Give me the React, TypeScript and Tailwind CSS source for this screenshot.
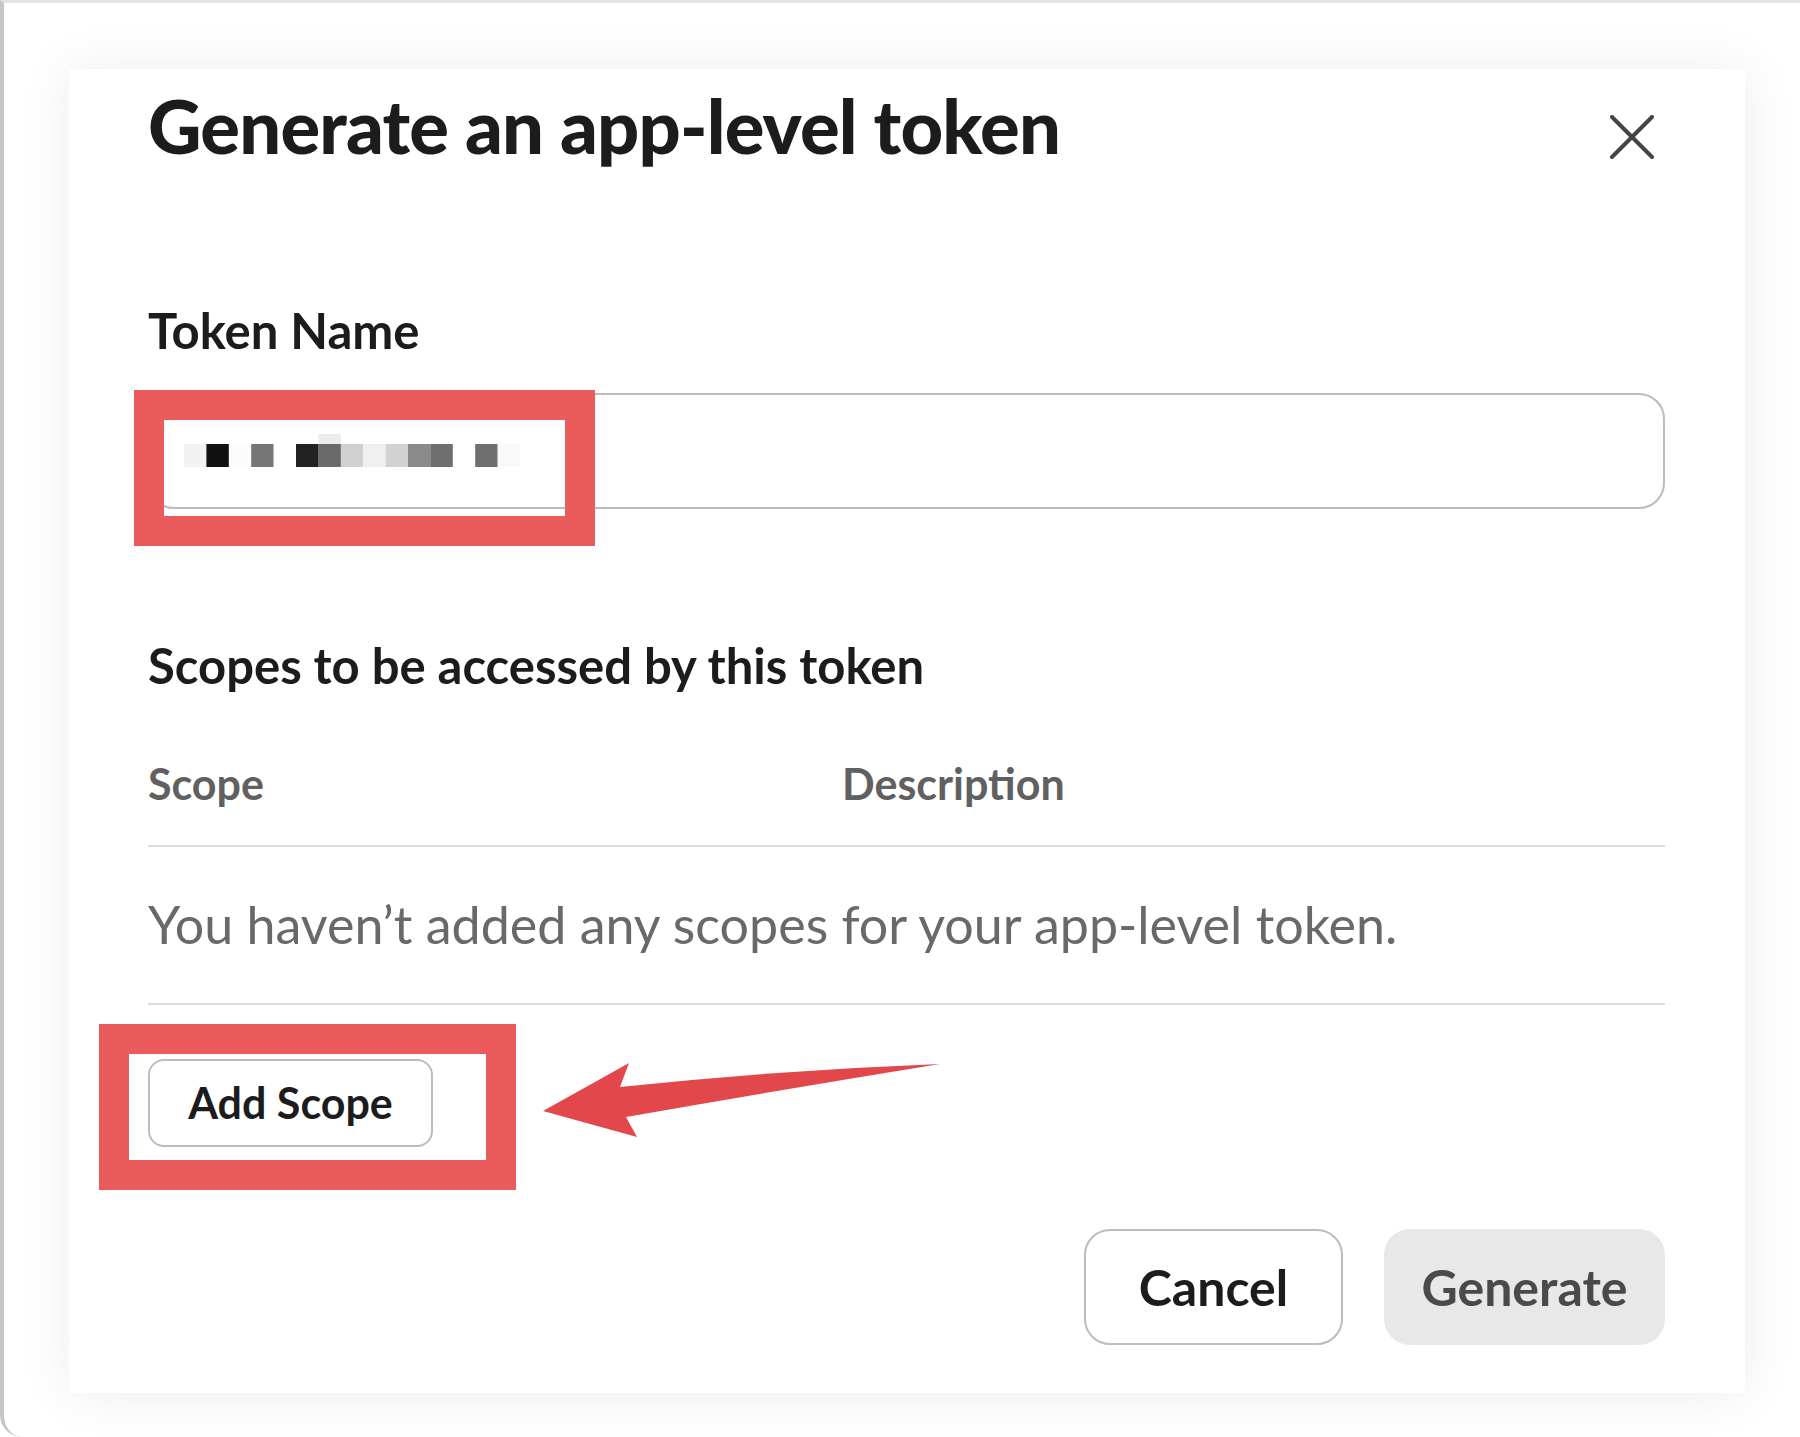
import React from 'react'

// pixelated token value, one cell per block
const blocks = [
  '#f2f2f2', '#111111', '#fcfcfc', '#767676', '#ffffff', '#222222', '#6a6a6a', '#d0d0d0',
  '#efefef', '#d3d3d3', '#8b8b8b', '#6f6f6f', '#ffffff', '#6f6f6f', '#f9f9f9',
]

function BlurredToken() {
  return (
    <svg width="336" height="33" viewBox="0 0 336 33" className="block">
      <rect x={6 * 22.4} y="0" width="22.4" height="10" fill="#ebebeb" />
      {blocks.map((c, i) => (
        <rect key={i} x={i * 22.4} y="10" width="22.6" height="23" fill={c} />
      ))}
    </svg>
  )
}

function CloseIcon() {
  return (
    <svg width="44" height="44" viewBox="0 0 44 44" fill="none">
      <path d="M2 2 L42 42 M42 2 L2 42" stroke="#454545" strokeWidth="4" strokeLinecap="round" />
    </svg>
  )
}

// ── annotation overlays (red boxes + arrow) ───────────────────────────────────
// offsets are page coords minus the frame border (4px left, 3px top)

function Annotations() {
  return (
    <>
      <div className="absolute left-[130px] top-[387px] w-[461px] h-[156px] border-[30px] border-[#eb5b5b] pointer-events-none" />
      <div className="absolute left-[95px] top-[1021px] w-[417px] h-[166px] border-[30px] border-[#eb5b5b] pointer-events-none" />
      <svg className="absolute left-[-4px] top-[-3px] pointer-events-none" width="1800" height="1437">
        <path
          d="M543 1111 L629 1063 L620 1087 Q780 1070 940 1064 Q780 1090 626 1117 L637 1137 Z"
          fill="#e2474b"
        />
      </svg>
    </>
  )
}

export default function App() {
  return (
    <div className="relative w-[1800px] h-[1437px] bg-white border-l-[4px] border-t-[3px] border-l-[#c6c6c6] border-t-[#e4e4e4] rounded-bl-[22px] overflow-hidden font-[Lato,sans-serif]">
      <div className="ml-[65px] mt-[66px] w-[1676px] h-[1324px] bg-white shadow-[0_0_50px_rgba(0,0,0,0.08)] pl-[79px] pr-[80px] pt-[13px] flex flex-col">
        {/* header */}
        <div className="flex items-start justify-between">
          <h1 className="text-[74px] leading-[1.2] font-black tracking-[-0.8px] text-[#1d1c1d]">Generate an app-level token</h1>
          <button className="mt-[33px] mr-[11px]">
            <CloseIcon />
          </button>
        </div>

        <label className="mt-[130px] text-[49px] leading-[1.2] font-bold text-[#1d1c1d]">Token Name</label>
        <div className="mt-[33px] h-[116px] border-2 border-[#bcbcbc] rounded-[26px] flex items-center pl-[34px]">
          <BlurredToken />
        </div>

        <h2 className="mt-[127px] text-[49px] leading-[1.2] font-bold text-[#1d1c1d]">Scopes to be accessed by this token</h2>

        <div className="mt-[64px] flex pb-[35px] border-b-2 border-[#dddddd] text-[43px] leading-[1.2] font-bold text-[#616061]">
          <div className="w-[694px]">Scope</div>
          <div>Description</div>
        </div>
        <p className="pt-[46px] pb-[48px] border-b-2 border-[#dddddd] text-[52px] leading-[1.2] text-[#696969]">
          You haven’t added any scopes for your app-level token.
        </p>

        <div className="mt-[54px]">
          <button className="h-[88px] w-[285px] border-2 border-[#bcbcbc] rounded-[16px] text-[43px] font-bold text-[#1d1c1d]">
            Add Scope
          </button>
        </div>

        <div className="mt-[82px] flex justify-end gap-[41px]">
          <button className="h-[116px] w-[259px] border-2 border-[#bcbcbc] rounded-[26px] text-[50px] font-bold text-[#1d1c1d]">
            Cancel
          </button>
          <button className="h-[116px] w-[281px] bg-[#e8e8e8] rounded-[26px] text-[50px] font-bold text-[#4a4a4a]">
            Generate
          </button>
        </div>
      </div>
      <Annotations />
    </div>
  )
}
